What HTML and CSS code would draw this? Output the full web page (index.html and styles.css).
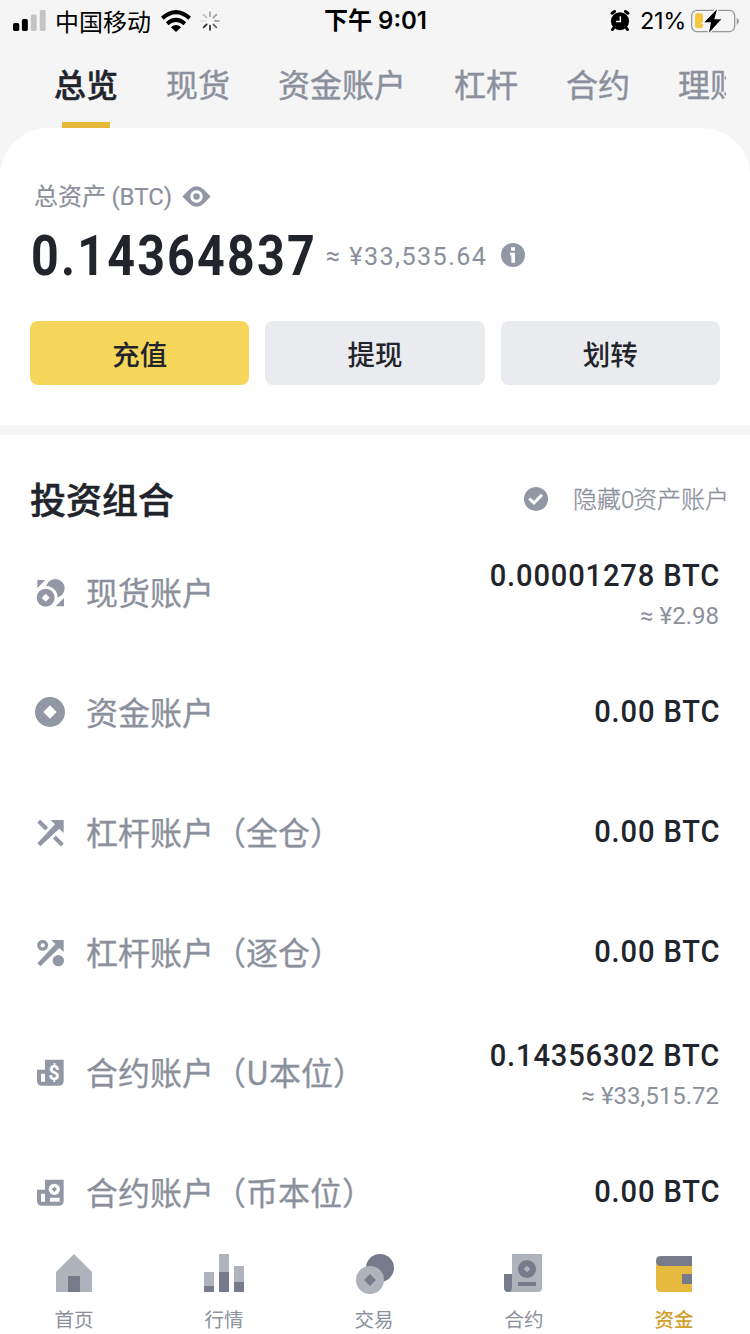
FILE: index.html
```html
<!DOCTYPE html>
<html lang="zh-CN">
<head>
<meta charset="utf-8">
<title>资金总览</title>
<link rel="stylesheet" href="styles.css">
</head>
<body>
<div class="screen">
  <header class="status">
    <div class="status-left">
      <svg class="signal" viewBox="0 0 100 63"><rect x="0" y="39" width="19" height="24" rx="5"/><rect x="27" y="27" width="18" height="36" rx="5"/><g fill="#c4c4c6"><rect x="54" y="13" width="18" height="50" rx="5"/><rect x="81" y="0" width="18" height="63" rx="5"/></g></svg>
      <span class="carrier">中国移动</span>
      <svg class="wifi" viewBox="0 0 88 64"><g fill="none" stroke="#000" stroke-width="12"><path d="M4 24Q44-12 84 24"/><path d="M18 40Q44 18 70 40"/></g><path d="M29 50Q44 38 59 50L44 64Z"/></svg>
      <svg class="spinner" viewBox="-30 -30 60 60"><g stroke="#000" stroke-width="5" stroke-linecap="round"><path d="M0-14V-27" opacity=".35"/><path d="M10-10L19-19" opacity=".35"/><path d="M14 0H27" opacity=".4"/><path d="M10 10L19 19" opacity=".6"/><path d="M0 14V27" opacity=".85"/><path d="M-10 10L-19 19" opacity=".85"/><path d="M-14 0H-27" opacity=".1"/><path d="M-10-10L-19-19" opacity=".2"/></g></svg>
    </div>
    <div class="time">下午 9:01</div>
    <div class="status-right">
      <svg class="alarm" viewBox="0 0 54 58"><circle cx="27" cy="31" r="25"/><g stroke="#000" stroke-width="8" stroke-linecap="round"><path d="M5 9L12 4M49 9L42 4M9 50L6 54M45 50L48 54"/></g><path d="M28 17V32H16" fill="none" stroke="#f5f5f5" stroke-width="4"/></svg>
      <span class="percent">21%</span>
      <svg class="battery" viewBox="0 0 144 72"><rect x="2" y="4" width="129" height="64" rx="16" fill="none" stroke="#98989a" stroke-width="4"/><path d="M137 26Q144 30 144 36T137 48Z" fill="#98989a"/><rect x="12" y="13" width="24" height="45" rx="7" fill="#f4c83e"/><path d="M78 1L40 40H60L54 71L91 31H70Z" stroke="#f5f5f5" stroke-width="9" paint-order="stroke"/></svg>
    </div>
  </header>

  <nav class="tabs">
    <span class="tab tab-active">总览</span><span class="tab">现货</span><span class="tab">资金账户</span><span class="tab">杠杆</span><span class="tab">合约</span><span class="tab">理财</span>
  </nav>

  <section class="summary">
    <div class="summary-label">
      <span>总资产 <span class="latin">(BTC)</span></span>
      <svg class="eye" viewBox="0 0 86 64"><path fill-rule="evenodd" d="M0 32L21 11Q43-10 65 11L86 32L65 53Q43 74 21 53ZM43 13a19 19 0 1 0 0 38a19 19 0 1 0 0-38ZM43 22a10 10 0 1 1 0 20a10 10 0 1 1 0-20Z"/></svg>
    </div>
    <div class="balance">
      <div class="total"><span>0.14364837</span></div>
      <div class="approx"><span>≈ ¥33,535.64</span></div>
      <svg class="info" viewBox="0 0 72 72"><circle cx="36" cy="36" r="36"/><path d="M30 13H42V23H30ZM27 29H42V59H31V37H27Z" fill="#fff"/></svg>
    </div>
    <div class="actions">
      <button class="action action-primary">充值</button>
      <button class="action">提现</button>
      <button class="action">划转</button>
    </div>
  </section>

  <main class="portfolio">
    <div class="portfolio-head">
      <h1 class="title">投资组合</h1>
      <label class="hide-zero">
        <svg class="check" viewBox="0 0 72 72"><circle cx="36" cy="36" r="36"/><path d="M16 35L30 48L54 23" fill="none" stroke="#fff" stroke-width="9"/></svg>
        <span>隐藏<span class="latin zero">0</span>资产账户</span>
      </label>
    </div>
    <ul class="accounts">
      <li class="account">
        <svg class="account-icon" viewBox="0 0 96 96"><circle cx="64" cy="37" r="28"/><circle cx="35" cy="65" r="36" fill="#fff"/><path d="M10 12H34L10 36ZM90 66V91H65Z"/><path fill-rule="evenodd" d="M35 38a27 27 0 1 0 0 54a27 27 0 1 0 0-54ZM35 53L47 65L35 77L23 65Z"/></svg>
        <span class="name">现货账户</span>
        <div class="value value-double"><b>0.00001278 BTC</b><small>≈ ¥2.98</small></div>
      </li>
      <li class="account">
        <svg class="account-icon" viewBox="0 0 96 96"><path fill-rule="evenodd" d="M48 3a45 45 0 1 0 0 90a45 45 0 1 0 0-90ZM48 28L68 48L48 68L28 48Z"/></svg>
        <span class="name">资金账户</span>
        <div class="value"><b>0.00 BTC</b></div>
      </li>
      <li class="account">
        <svg class="account-icon" viewBox="0 0 96 96"><path d="M50 12H89V51L76 38L19 91L10 82L63 25Z"/><path d="M14 15L38 39M61 63L85 87" fill="none" stroke="#9297a5" stroke-width="12"/></svg>
        <span class="name">杠杆账户（全仓）</span>
        <div class="value"><b>0.00 BTC</b></div>
      </li>
      <li class="account">
        <svg class="account-icon" viewBox="0 0 96 96"><path d="M52 12H89V48L76 36L19 91L10 82L64 24Z"/><circle cx="26" cy="28" r="11.500" fill="none" stroke="#9297a5" stroke-width="10"/><circle cx="73" cy="74" r="17"/></svg>
        <span class="name">杠杆账户（逐仓）</span>
        <div class="value"><b>0.00 BTC</b></div>
      </li>
      <li class="account">
        <svg class="account-icon" viewBox="0 0 96 96"><path fill-rule="evenodd" d="M33 11H89V74Q89 89 74 89H24Q9 89 9 74V41H33ZM21 53V77H33V53Z"/><text class="dollar" x="60" y="71">$</text></svg>
        <span class="name">合约账户（U本位）</span>
        <div class="value value-double"><b>0.14356302 BTC</b><small>≈ ¥33,515.72</small></div>
      </li>
      <li class="account">
        <svg class="account-icon" viewBox="0 0 96 96"><path fill-rule="evenodd" d="M33 11H89V74Q89 89 74 89H24Q9 89 9 74V41H33ZM21 53V77H33V53ZM48 65V77H77V65ZM61 23a17 17 0 1 0 0 34a17 17 0 1 0 0-34ZM61 32L69 40L61 48L53 40Z"/></svg>
        <span class="name">合约账户（币本位）</span>
        <div class="value"><b>0.00 BTC</b></div>
      </li>
    </ul>
  </main>

  <nav class="dock">
    <a class="dock-item"><svg viewBox="0 0 120 120"><path fill="#aeb3bc" d="M6 54L60 0L114 54V114H6Z"/><path fill="#757b8b" d="M42 66H78V114H42Z"/></svg><span>首页</span></a>
    <a class="dock-item"><svg viewBox="0 0 120 120"><path fill="#aeb3bc" d="M0 54H30V97H0ZM45 0H75V54H45ZM90 36H120V84H90Z"/><path fill="#757b8b" d="M0 96H30V114H0ZM45 54H75V114H45ZM90 84H120V114H90Z"/></svg><span>行情</span></a>
    <a class="dock-item"><svg viewBox="0 0 120 120"><circle cx="78" cy="42" r="42" fill="#757b8b"/><circle cx="48" cy="78" r="42" fill="#aeb3bc"/><path fill="#757b8b" d="M48 60L66 78L48 96L30 78Z"/></svg><span>交易</span></a>
    <a class="dock-item"><svg viewBox="0 0 120 120"><path fill="#aeb3bc" d="M24 0H114V102Q114 114 102 114H12L24 102Z"/><path fill="#757b8b" d="M0 60H24V102Q24 114 12 114T0 102ZM42 84H96V96H42Z"/><circle cx="69" cy="45" r="27" fill="#757b8b"/><path fill="#aeb3bc" d="M69 35L79 45L69 55L59 45Z"/></svg><span>合约</span></a>
    <a class="dock-item dock-active"><svg viewBox="0 0 120 120"><path fill="#e6b93f" d="M6 20H114V114H21Q6 114 6 99Z"/><path fill="#757b8b" d="M21 6H114V36H21Q6 36 6 21T21 6ZM84 60H114V90H84Z"/></svg><span>资金</span></a>
  </nav>
</div>
</body>
</html>
```
FILE: styles.css
```css
* { box-sizing: border-box; }

body {
  margin: 0;
  background: #f5f5f5;
  color: #22242c;
  font-family: "Noto Sans CJK SC", sans-serif;
}

.screen {
  display: flex;
  flex-direction: column;
  width: 750px;
  height: 1334px;
  overflow: hidden;
}

svg { display: block; flex: none; }

.latin { font-family: Roboto, sans-serif; }

/* Status bar */
.status {
  display: grid;
  grid-template-columns: 1fr auto 1fr;
  align-items: center;
  height: 40px;
  padding: 0 11px 0 13px;
  color: #000;
  font-size: 24px;
  line-height: 38px;
}
.status-left, .status-right { display: flex; align-items: center; }
.status-right { justify-content: flex-end; }
.signal { width: 33px; height: 21px; margin: 0 9px 2px 0; }
.carrier { width: 96px; }
.wifi { width: 30px; height: 22px; margin-left: 10px; }
.spinner { width: 20px; height: 20px; margin-left: 9px; }
.time { margin-right: 1px; font-family: Inter, "Noto Sans CJK SC", sans-serif; font-weight: 600; font-size: 24px; line-height: 42px; }
.alarm { width: 20px; height: 21px; margin: 0 10px 2px 0; }
.percent { font-family: Inter, sans-serif; font-size: 23.5px; line-height: 42px; letter-spacing: -.3px; margin-right: 5px; }
.battery { width: 48px; height: 24px; }

/* Tabs */
.tabs {
  display: flex;
  gap: 48px;
  height: 88px;
  margin-right: 24px;
  padding-left: 54px;
  overflow: hidden;
  white-space: nowrap;
  color: #8b909c;
  font-size: 32px;
  line-height: 86px;
  -webkit-text-stroke: .4px;
}
.tab { flex: none; }
.tab-active {
  display: flex;
  flex-direction: column;
  align-items: center;
  color: #22242c;
  font-weight: 500;
  -webkit-text-stroke: .5px;
}
.tab-active::after {
  content: "";
  flex: none;
  width: 48px;
  height: 6px;
  margin-top: -4px;
  background: #e6b93b;
}

/* Balance summary */
.summary {
  height: 297px;
  padding: 48px 30px 0;
  background: #fff;
  border-radius: 48px 48px 0 0;
}
.summary-label {
  display: flex;
  align-items: center;
  gap: 10px;
  height: 40px;
  padding-left: 4px;
  color: #8b909c;
  font-size: 24px;
  line-height: 40px;
  -webkit-text-stroke: .2px;
}
.eye { width: 29px; height: 21px; fill: #9297a5; }
.balance {
  display: flex;
  align-items: center;
  height: 80px;
  font-family: Roboto, sans-serif;
  white-space: nowrap;
}
.total { width: 295px; margin-left: 1px; font-size: 55px; font-weight: 700; line-height: 82px; letter-spacing: 2.5px; }
.total span { display: inline-block; transform: scaleX(.88); transform-origin: left; }
.approx { width: 175px; color: #8b909c; font-size: 26.5px; line-height: 80px; letter-spacing: 1.5px; }
.approx span { display: inline-block; transform: scaleX(.95); transform-origin: left; }
.info { width: 24px; height: 24px; margin-bottom: 2px; fill: #9297a5; }
.actions {
  display: grid;
  grid-template-columns: repeat(3, 1fr);
  gap: 16px;
  margin-top: 25px;
}
.action {
  height: 64px;
  padding: 0;
  border: 0;
  border-radius: 8px;
  background: #eaebef;
  color: #22242c;
  font: 500 27.5px/64px "Noto Sans CJK SC", sans-serif;
}
.action-primary { background: #f5d65a; }

/* Portfolio */
.portfolio {
  flex: 1;
  min-height: 0;
  margin-top: 10px;
  padding: 25px 30px 0;
  overflow: hidden;
  background: #fff;
}
.portfolio-head {
  display: flex;
  justify-content: space-between;
  height: 72px;
}
.title { margin: 0; font-size: 36px; font-weight: 500; line-height: 76px; -webkit-text-stroke: .5px; }
.hide-zero {
  display: flex;
  align-items: center;
  gap: 25px;
  margin: 5px -9px 0 0;
  color: #8b909c;
  font-size: 24px;
  font-weight: 300;
  line-height: 76px;
  -webkit-text-stroke: .3px;
}
.zero { display: inline-block; width: 12px; }
.check { width: 24px; height: 24px; fill: #9297a5; }
.accounts { margin: 0; padding: 0; list-style: none; }
.account {
  display: flex;
  align-items: center;
  height: 120px;
}
.account-icon { width: 32px; height: 32px; margin: 0 20px 0 4px; fill: #9297a5; }
.name { flex: 1; color: #8b909c; font-size: 32px; line-height: 116px; padding-bottom: 2px; white-space: nowrap; -webkit-text-stroke: .3px; }
.dollar { fill: #fff; font: 700 58px Roboto, sans-serif; text-anchor: middle; }
.value {
  display: flex;
  flex-direction: column;
  align-items: flex-end;
  padding-bottom: 2px;
  font-family: Roboto, sans-serif;
  white-space: nowrap;
}
.value-double { padding: 6px 0 0; }
.value b {
  font-size: 31.5px;
  font-weight: 500;
  line-height: 41px;
  letter-spacing: .9px;
  transform: scaleX(.925);
  transform-origin: right;
}
.value small { margin-right: 1px; color: #8b909c; font-size: 24px; line-height: 40px; }

/* Bottom navigation */
.dock {
  display: grid;
  grid-template-columns: repeat(5, 150px);
  height: 92px;
  margin-left: -1px;
  padding-top: 12px;
  background: #fff;
  color: #8b909c;
  font-size: 19.5px;
  line-height: 30px;
}
.dock-item { display: flex; flex-direction: column; align-items: center; gap: 10px; }
.dock-item svg { width: 40px; height: 40px; }
.dock-active { color: #d0a02c; font-weight: 500; }
```
